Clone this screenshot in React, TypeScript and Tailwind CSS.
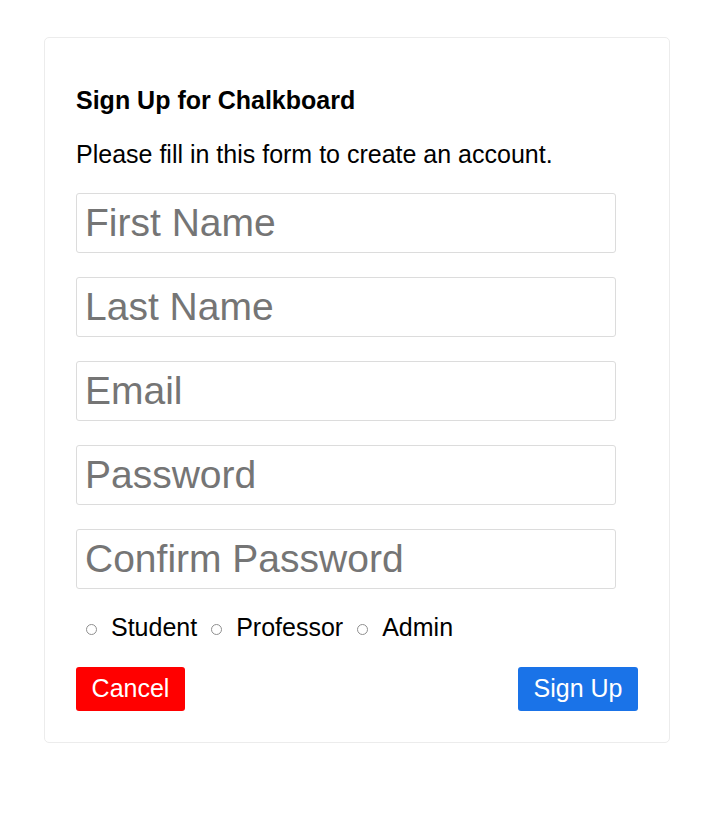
import React from "react";

const fields = ["First Name", "Last Name", "Email", "Password", "Confirm Password"];
const roles = ["Student", "Professor", "Admin"];

export default function App() {
  return (
    <div
      className="min-h-[814px] w-[720px] bg-white pl-[44px] pt-[37px]"
      style={{ fontFamily: '"Liberation Sans", Arial, sans-serif' }}
    >
      <div className="w-[626px] h-[706px] rounded-[5px] border border-[#ececec] bg-white px-[31px] pt-[47px] pb-[31px]">
        <h1 className="text-[25px] leading-[30px] font-bold text-black">Sign Up for Chalkboard</h1>
        <p className="mt-[24px] text-[25px] leading-[30px] text-black">
          Please fill in this form to create an account.
        </p>
        <div className="mt-[24px] flex flex-col gap-[24px]">
          {fields.map((f) => (
            <input
              key={f}
              type={f.includes("Password") ? "password" : "text"}
              placeholder={f}
              className="w-[540px] h-[60px] rounded-[3px] border border-[#dcdcdc] px-[8px] text-[39px] text-black placeholder:text-[#757575] outline-none"
            />
          ))}
        </div>
        <div className="mt-[23px] flex h-[30px] items-center pl-[10px] text-[25px] leading-[30px] text-black">
          {roles.map((r) => (
            <label key={r} className="mr-[14px] flex items-center">
              <span className="mt-[5px] mr-[14px] inline-block h-[11px] w-[11px] rounded-full border border-[#8f8f8f] bg-white" />
              <span>{r}</span>
            </label>
          ))}
        </div>
        <div className="mt-[25px] flex items-center justify-between">
          <button className="h-[44px] w-[109px] rounded-[3px] bg-[#ff0000] text-[25px] text-white">
            Cancel
          </button>
          <button className="h-[44px] w-[120px] rounded-[3px] bg-[#1a73e8] text-[25px] text-white">
            Sign Up
          </button>
        </div>
      </div>
    </div>
  );
}
